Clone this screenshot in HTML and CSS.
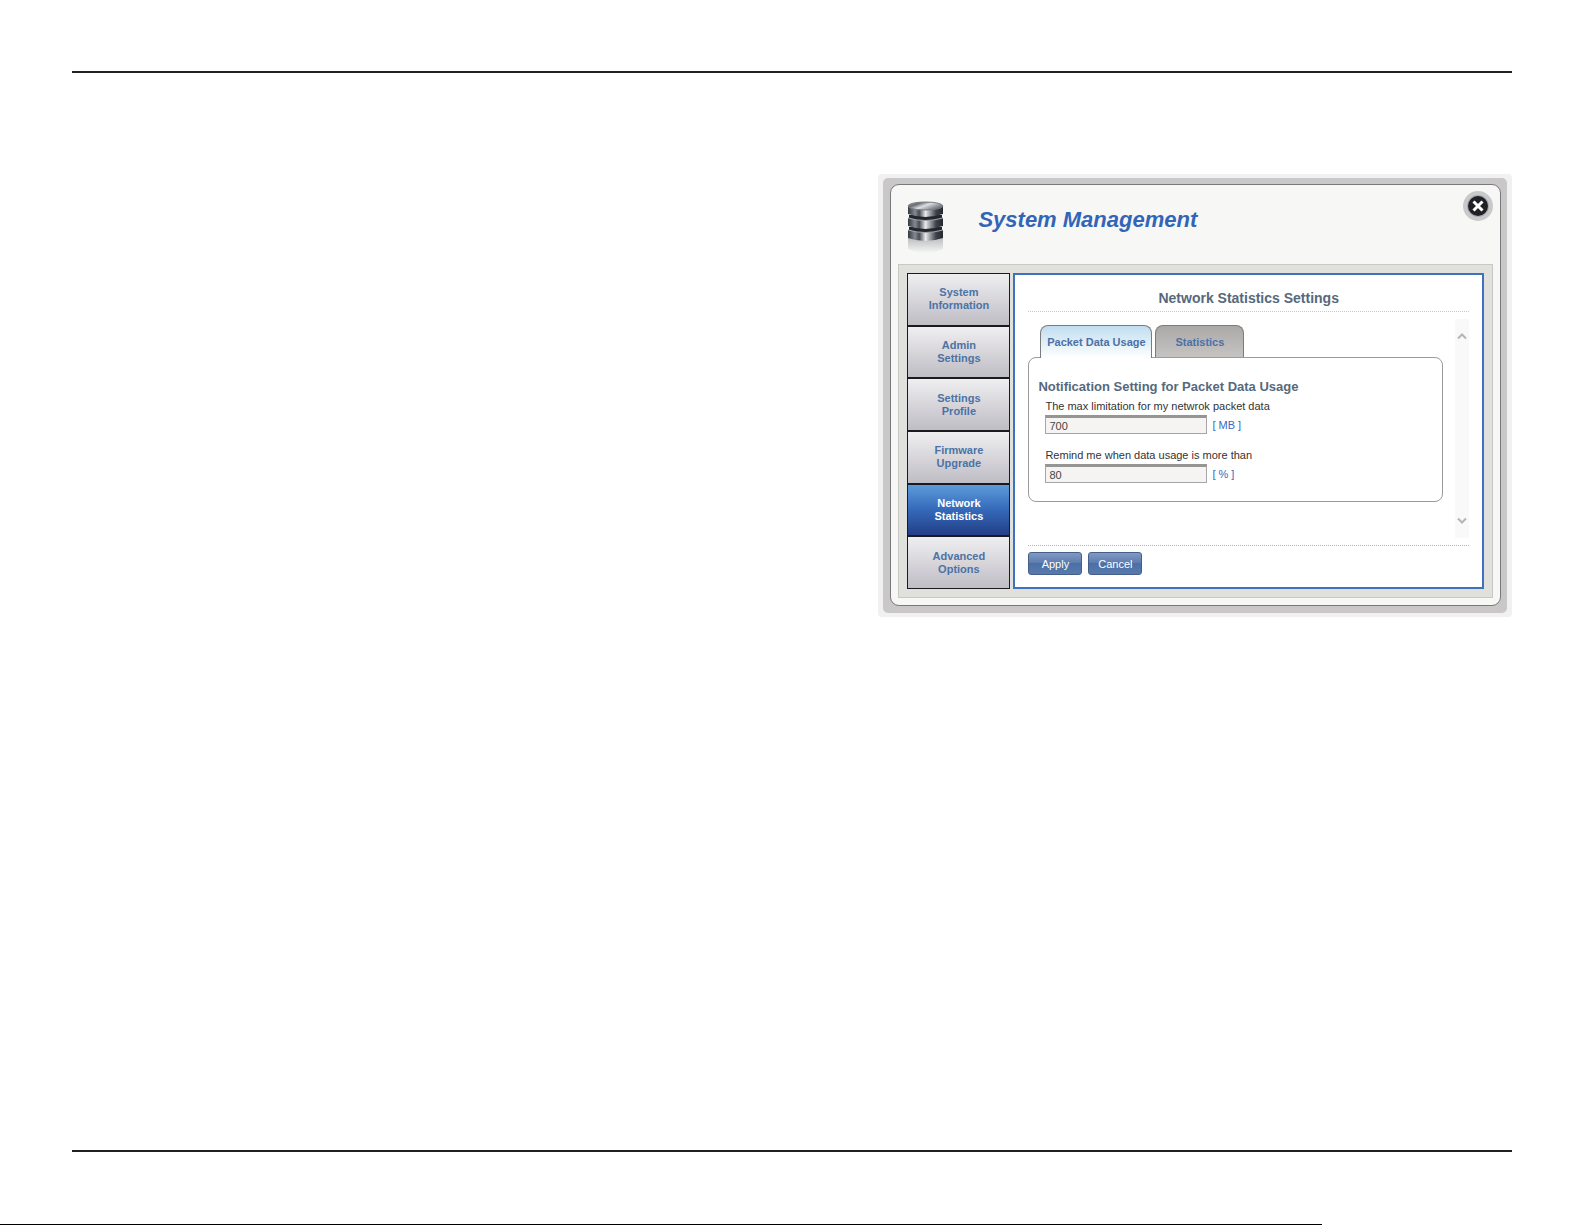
FILE: index.html
```html
<!DOCTYPE html>
<html lang="en">
  <head>
    <meta charset="utf-8">
    <title>System Management</title>
    <link rel="stylesheet" href="styles.css">
  </head>
  <body>
    <main class="page">
      <section class="dialog">
        <div class="frame">
          <div class="window">
            <header class="header">
              <svg class="logo" viewBox="0 0 44 60" aria-hidden="true">
                <defs>
                  <linearGradient id="metal">
                    <stop offset="0" stop-color="#33373e" />
                    <stop offset="0.2" stop-color="#858a92" />
                    <stop offset="0.32" stop-color="#484c54" />
                    <stop offset="0.5" stop-color="#e8e9eb" />
                    <stop offset="0.66" stop-color="#8b8f96" />
                    <stop offset="0.8" stop-color="#3d424a" />
                    <stop offset="1" stop-color="#252930" />
                  </linearGradient>
                  <linearGradient id="top" x2="1" y2="0.6">
                    <stop offset="0" stop-color="#b5b8bd" />
                    <stop offset="0.3" stop-color="#666b74" />
                    <stop offset="0.55" stop-color="#dcdee1" />
                    <stop offset="1" stop-color="#656a73" />
                  </linearGradient>
                  <linearGradient id="fade" x2="0" y2="1">
                    <stop offset="0" stop-color="#b9babc" />
                    <stop offset="1" stop-color="#f7f7f6" />
                  </linearGradient>
                </defs>
                <path d="M4 36v12q18 8 35 0V36z" fill="url(#fade)" />
                <path d="M4 29v8q17 6 35 0v-8z" fill="url(#metal)" />
                <path d="M5 26v3q16 5 33 0v-3z" fill="#24272c" />
                <path d="M4 29q17 5 35 0" fill="none" stroke="#a7aab0" />
                <path d="M4 17v8q17 6 35 0v-8z" fill="url(#metal)" />
                <path d="M5 14v3q16 5 33 0v-3z" fill="#24272c" />
                <path d="M4 17q17 5 35 0" fill="none" stroke="#a7aab0" />
                <path d="M4 5v8q17 6 35 0V5z" fill="url(#metal)" />
                <ellipse cx="21.500" cy="5" rx="17.500" ry="4" fill="url(#top)" stroke="#777b82" />
              </svg>
              <h1 class="title">System Management</h1>
              <button class="close" type="button" aria-label="Close">
                <svg viewBox="0 0 30 30">
                  <circle cx="15" cy="15" r="15" fill="#c9c9c9" />
                  <circle cx="15" cy="15" r="11" fill="#aaaab2" />
                  <circle cx="15" cy="15" r="10" fill="#202125" />
                  <path d="M10.500 10.500l9 9M19.500 10.500l-9 9" stroke="#fff" stroke-width="3" />
                </svg>
              </button>
            </header>

            <div class="body">
              <nav class="menu">
                <a href="#info">System<br>Information</a>
                <a href="#admin">Admin<br>Settings</a>
                <a href="#profile">Settings<br>Profile</a>
                <a href="#firmware">Firmware<br>Upgrade</a>
                <a class="active" href="#network">Network<br>Statistics</a>
                <a href="#advanced">Advanced<br>Options</a>
              </nav>

              <form class="content">
                <h2 class="heading">Network Statistics Settings</h2>
                <div class="scroll">
                  <div class="settings">
                    <div class="tabs" role="tablist">
                      <button class="tab selected" type="button" role="tab" aria-selected="true">Packet Data Usage</button>
                      <button class="tab" type="button" role="tab" aria-selected="false">Statistics</button>
                    </div>
                    <div class="panel">
                      <h3>Notification Setting for Packet Data Usage</h3>
                      <div class="field">
                        <label for="limit">The max limitation for my netwrok packet data</label>
                        <div class="entry">
                          <input type="text" id="limit" name="limit" value="700" />
                          <span>[ MB ]</span>
                        </div>
                      </div>
                      <div class="field">
                        <label for="remind">Remind me when data usage is more than</label>
                        <div class="entry">
                          <input type="text" id="remind" name="remind" value="80" />
                          <span>[ % ]</span>
                        </div>
                      </div>
                    </div>
                  </div>
                  <div class="scrollbar">
                    <button type="button" aria-label="Scroll up">
                      <svg viewBox="0 0 10 8"><path d="M1 6.500l4-4 4 4" /></svg>
                    </button>
                    <button type="button" aria-label="Scroll down">
                      <svg viewBox="0 0 10 8"><path d="M1 1.500l4 4 4-4" /></svg>
                    </button>
                  </div>
                </div>
                <div class="actions">
                  <button type="submit">Apply</button>
                  <button type="reset">Cancel</button>
                </div>
              </form>
            </div>
          </div>
        </div>
      </section>
    </main>
    <div class="edge"></div>
  </body>
</html>
```

FILE: styles.css
```css
* {
  margin: 0;
  padding: 0;
  box-sizing: border-box;
}

body {
  display: flex;
  flex-direction: column;
  min-height: 100vh;
  background: #fff;
  font-family: "Liberation Sans", Arial, sans-serif;
}

button,
input {
  font-family: inherit;
}

.page {
  flex: 1;
  margin: 71px 73px 72px 72px;
  padding-top: 101px;
  border-top: 2px solid #231f20;
  border-bottom: 2px solid #231f20;
}

.edge {
  width: 83.4%;
  height: 1px;
  background: #000;
}

/* Dialog frame */
.dialog {
  width: 44%;
  min-width: 600px;
  margin-left: auto;
  padding: 4px 5px;
  border-radius: 4px;
  background: #f1f1f1;
}

.frame {
  padding: 6px 6px 7px 7px;
  border-radius: 5px;
  background: #c9c7c7;
}

.window {
  padding: 0 7px 7px;
  border: 1px solid #77797b;
  border-radius: 9px;
  background: #f7f7f6;
}

.header {
  display: flex;
  align-items: flex-start;
  height: 79px;
  padding-top: 6px;
  padding-left: 6px;
}

.logo {
  width: 44px;
  height: 60px;
  margin-top: 10px;
}

.title {
  flex: 1;
  margin: 16px 0 0 30px;
  font-size: 22px;
  line-height: 26px;
  font-style: italic;
  color: #3265b8;
}

.close {
  width: 30px;
  height: 30px;
  border: none;
  background: none;
  cursor: pointer;
}

.close svg {
  display: block;
}

.body {
  display: flex;
  gap: 3px;
  padding: 8px;
  border: 1px solid #c8c8c4;
  background: #e0e0dd;
}

/* Left menu */
.menu {
  display: flex;
  flex-direction: column;
  gap: 2px;
  width: 103px;
  padding: 1px;
  background: #1b1b1d;
}

.menu a {
  flex: 1;
  display: flex;
  align-items: center;
  justify-content: center;
  background: linear-gradient(#efeef0, #bfbdc5);
  font-size: 11px;
  font-weight: bold;
  line-height: 13px;
  text-align: center;
  text-decoration: none;
  color: #4b73a5;
}

.menu .active {
  background: linear-gradient(#5c9cdb, #3568b9 50%, #233f86);
  color: #fff;
}

/* Settings */
.content {
  flex: 1;
  padding: 14px 13px 12px;
  border: 2px solid #3f71c3;
  background: #fff;
}

.heading {
  padding-bottom: 4px;
  border-bottom: 1px dotted #c8c8c8;
  font-size: 14px;
  line-height: 18px;
  text-align: center;
  color: #56697c;
}

.scroll {
  display: flex;
  gap: 12px;
  margin: 7px 0;
}

.settings {
  flex: 1;
  padding: 6px 0 36px;
}

.tabs {
  display: flex;
  gap: 3px;
  padding-left: 12px;
}

.tab {
  width: 89px;
  height: 32px;
  border: 1px solid #7b7b7b;
  border-bottom: none;
  border-radius: 8px 8px 0 0;
  background: linear-gradient(#aaa9a8, #c5c4c2);
  font-size: 11px;
  font-weight: bold;
  color: #4d70a6;
  cursor: pointer;
}

.tab.selected {
  width: 112px;
  height: 33px;
  margin-bottom: -1px;
  background: linear-gradient(#c0ddf0, #fff);
  z-index: 1;
}

.panel {
  padding: 19px 9px 18px;
  border: 1px solid #9b9b9b;
  border-radius: 8px;
}

.panel h3 {
  font-size: 13px;
  line-height: 20px;
  color: #56697c;
}

.field {
  padding-left: 7px;
}

.field + .field {
  margin-top: 12px;
}

.field label {
  display: block;
  font-size: 11px;
  line-height: 18px;
  color: #333;
}

.entry {
  display: flex;
  align-items: center;
  gap: 5px;
}

.entry input {
  width: 162px;
  height: 19px;
  padding: 0 3px;
  border: 1px solid #a5a5a5;
  border-top: 3px solid #959595;
  background: #f5f4f3;
  font-size: 11px;
  color: #454545;
}

.entry span {
  font-size: 11px;
  color: #3b67bd;
}

.scrollbar {
  display: flex;
  flex-direction: column;
  justify-content: space-between;
  width: 14px;
  padding: 13px 2px;
  background: #f9f9f9;
}

.scrollbar button {
  height: 8px;
  border: none;
  background: none;
}

.scrollbar svg {
  display: block;
  width: 10px;
  height: 8px;
  fill: none;
  stroke: #b5b5b5;
  stroke-width: 2;
}

.actions {
  display: flex;
  gap: 6px;
  padding-top: 6px;
  border-top: 1px dotted #b5b5b5;
}

.actions button {
  width: 54px;
  height: 23px;
  border: 1px solid #465f88;
  border-radius: 3px;
  background: linear-gradient(#8199c2, #5b7bad 50%, #4b70a6 50%, #5879ae);
  font-size: 11px;
  color: #fff;
  cursor: pointer;
}
```
